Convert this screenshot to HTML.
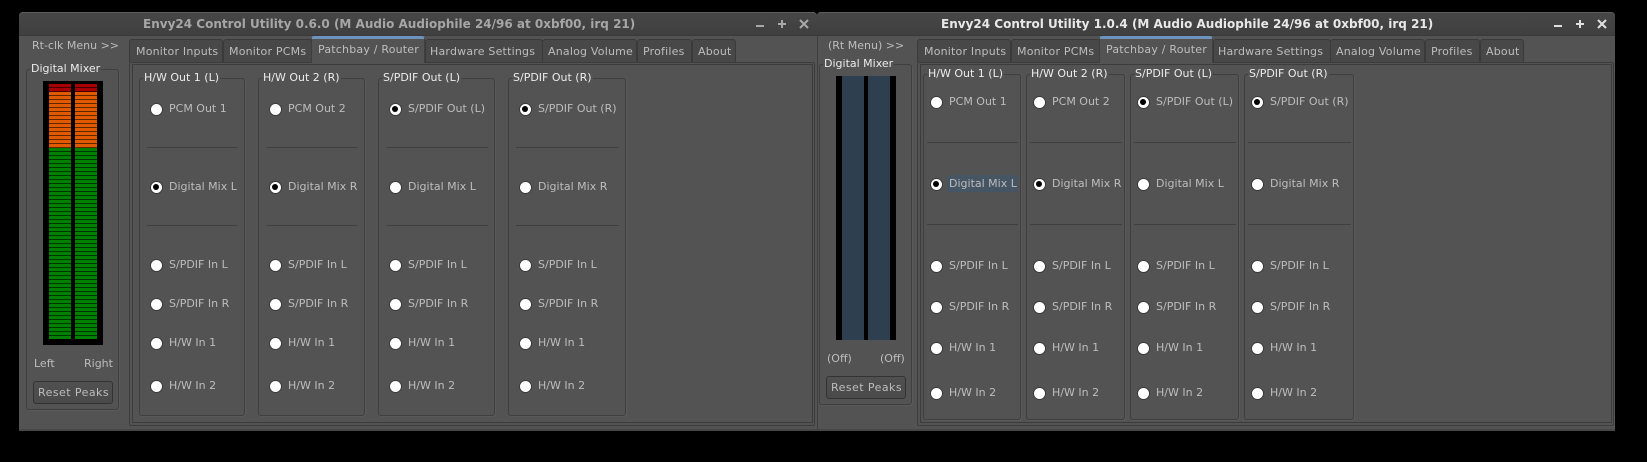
<!DOCTYPE html>
<html><head><meta charset="utf-8"><style>
html,body{margin:0;padding:0;background:#000;width:1647px;height:462px;overflow:hidden}
body{position:relative;font:11px "DejaVu Sans",sans-serif;color:#bdbdbd}
div{position:absolute;box-sizing:border-box}
.w{top:12px;height:419px;background:#535353;border-radius:4px 4px 0 0;border-bottom:2px solid #474747}
.tb{left:0;top:0;width:100%;height:24px;background:linear-gradient(#474747,#3f3f3f);border-top:1px solid #5c5c5c;border-bottom:1px solid #3a3a3a;border-radius:4px 4px 0 0}
.ti{top:16px;height:17px;line-height:17px;font-size:12px;font-weight:bold;white-space:pre}
.t{height:16px;line-height:16px;white-space:pre;margin-top:1px}
.k{letter-spacing:.2px}
.rp{letter-spacing:.45px}
.g{border:1px solid #3f3f3f;border-radius:3px;box-shadow:1px 1px 0 #5a5a5a}
.l{height:14px;line-height:14px;white-space:pre;color:#ececec;background:#535353;padding:0 1px;margin-top:1px}
.s{height:1px;background:#404040}
.r{width:11px;height:11px;margin:-.5px;border-radius:50%;background:#fff;box-shadow:0 0 0 1px #3a3a3a}
.r.o::after{content:"";position:absolute;left:2.5px;top:2.5px;width:6px;height:6px;border-radius:50%;background:#000}
.tab{top:39px;height:23px;background:#484848;border:1px solid #3a3a3a;border-bottom:0;border-radius:3px 3px 0 0}
.act{top:36px;height:27px;background:#535353;border:1px solid #3f3f3f;border-top:3px solid #6d92bd;border-bottom:0;border-radius:3px 3px 0 0}
.p{top:62px;height:364px;border:1px solid #3c3c3c;border-radius:2px}
.q{top:64px;height:360px;border:1px solid #3c3c3c}
.b{background:linear-gradient(#505050,#4a4a4a);border:1px solid #333;border-radius:3px;height:23px;width:80px}
</style></head><body>

<!-- window 1 -->
<div class="w" style="left:19px;width:798px"></div>
<div class="tb" style="left:19px;top:12px;width:798px"></div>
<div class="ti" style="left:143px;color:#a6a6a6">Envy24 Control Utility 0.6.0 (M Audio Audiophile 24/96 at 0xbf00, irq 21)</div>
<svg style="position:absolute;left:750px;top:15px" width="64" height="18" fill="none" stroke="#a8a8a8" stroke-width="2"><path d="M6 11h8M28 9h8M32 5v8M50 5l8 8M58 5l-8 8"/></svg>
<div class="t" style="left:32px;top:37px">Rt-clk Menu &gt;&gt;</div>

<div class="g" style="left:26px;top:69px;width:93px;height:341px"></div>
<div class="l" style="left:30px;top:61px;color:#ececec">Digital Mixer</div>
<div style="left:43px;top:81px;width:60px;height:264px;background:#000"></div>
<svg style="position:absolute;left:49px;top:84px" width="48" height="255">
<defs>
<pattern id="pr" width="48" height="4" patternUnits="userSpaceOnUse"><rect width="22" height="4" fill="#440000"/><rect x="26" width="22" height="4" fill="#440000"/><rect width="22" height="3" fill="#a80000"/><rect x="26" width="22" height="3" fill="#a80000"/></pattern>
<pattern id="po" width="48" height="4" patternUnits="userSpaceOnUse"><rect width="22" height="4" fill="#5e2600"/><rect x="26" width="22" height="4" fill="#5e2600"/><rect width="22" height="3" fill="#e25a00"/><rect x="26" width="22" height="3" fill="#e25a00"/></pattern>
<pattern id="pg" width="48" height="4" patternUnits="userSpaceOnUse"><rect width="22" height="4" fill="#003400"/><rect x="26" width="22" height="4" fill="#003400"/><rect width="22" height="3" fill="#008000"/><rect x="26" width="22" height="3" fill="#008000"/></pattern>
</defs>
<rect width="48" height="8" fill="url(#pr)"/>
<rect y="8" width="48" height="56" fill="url(#po)"/>
<rect y="64" width="48" height="191" fill="url(#pg)"/>
</svg>
<div class="t" style="left:34px;top:355px">Left</div>
<div class="t" style="left:84px;top:355px">Right</div>
<div class="b" style="left:33px;top:381px"></div>
<div class="t rp" style="left:38px;top:384px">Reset Peaks</div>

<div class="p" style="left:129px;width:686px"></div>
<div class="q" style="left:132px;width:681px;height:359px"></div>
<div class="tab" style="left:129px;width:94px"></div>
<div class="tab" style="left:223px;width:89px"></div>
<div class="tab" style="left:425px;width:118px"></div>
<div class="tab" style="left:542px;width:95px"></div>
<div class="tab" style="left:637px;width:55px"></div>
<div class="tab" style="left:692px;width:44px"></div>
<div class="act" style="left:311px;width:114px"></div>
<div class="t k" style="left:136px;top:43px">Monitor Inputs</div>
<div class="t k" style="left:229px;top:43px">Monitor PCMs</div>
<div class="t k" style="left:318px;top:41px">Patchbay / Router</div>
<div class="t k" style="left:430px;top:43px">Hardware Settings</div>
<div class="t k" style="left:548px;top:43px">Analog Volume</div>
<div class="t k" style="left:643px;top:43px">Profiles</div>
<div class="t k" style="left:698px;top:43px">About</div>

<div class="g" style="left:139px;top:78px;width:106px;height:338px"></div>
<div class="g" style="left:258px;top:78px;width:107px;height:338px"></div>
<div class="g" style="left:378px;top:78px;width:117px;height:338px"></div>
<div class="g" style="left:508px;top:78px;width:118px;height:338px"></div>
<div class="l" style="left:143px;top:70px">H/W Out 1 (L)</div>
<div class="l" style="left:262px;top:70px">H/W Out 2 (R)</div>
<div class="l" style="left:382px;top:70px">S/PDIF Out (L)</div>
<div class="l" style="left:512px;top:70px">S/PDIF Out (R)</div>
<div class="s" style="left:147px;top:147px;width:91px"></div>
<div class="s" style="left:147px;top:225px;width:91px"></div>
<div class="s" style="left:266px;top:147px;width:92px"></div>
<div class="s" style="left:266px;top:225px;width:92px"></div>
<div class="s" style="left:386px;top:147px;width:102px"></div>
<div class="s" style="left:386px;top:225px;width:102px"></div>
<div class="s" style="left:516px;top:147px;width:103px"></div>
<div class="s" style="left:516px;top:225px;width:103px"></div>

<div class="r" style="left:151px;top:104px"></div><div class="t" style="left:169px;top:100px">PCM Out 1</div>
<div class="r o" style="left:151px;top:182px"></div><div class="t" style="left:169px;top:178px">Digital Mix L</div>
<div class="r" style="left:151px;top:260px"></div><div class="t" style="left:169px;top:256px">S/PDIF In L</div>
<div class="r" style="left:151px;top:299px"></div><div class="t" style="left:169px;top:295px">S/PDIF In R</div>
<div class="r" style="left:151px;top:338px"></div><div class="t" style="left:169px;top:334px">H/W In 1</div>
<div class="r" style="left:151px;top:381px"></div><div class="t" style="left:169px;top:377px">H/W In 2</div>

<div class="r" style="left:270px;top:104px"></div><div class="t" style="left:288px;top:100px">PCM Out 2</div>
<div class="r o" style="left:270px;top:182px"></div><div class="t" style="left:288px;top:178px">Digital Mix R</div>
<div class="r" style="left:270px;top:260px"></div><div class="t" style="left:288px;top:256px">S/PDIF In L</div>
<div class="r" style="left:270px;top:299px"></div><div class="t" style="left:288px;top:295px">S/PDIF In R</div>
<div class="r" style="left:270px;top:338px"></div><div class="t" style="left:288px;top:334px">H/W In 1</div>
<div class="r" style="left:270px;top:381px"></div><div class="t" style="left:288px;top:377px">H/W In 2</div>

<div class="r o" style="left:390px;top:104px"></div><div class="t" style="left:408px;top:100px">S/PDIF Out (L)</div>
<div class="r" style="left:390px;top:182px"></div><div class="t" style="left:408px;top:178px">Digital Mix L</div>
<div class="r" style="left:390px;top:260px"></div><div class="t" style="left:408px;top:256px">S/PDIF In L</div>
<div class="r" style="left:390px;top:299px"></div><div class="t" style="left:408px;top:295px">S/PDIF In R</div>
<div class="r" style="left:390px;top:338px"></div><div class="t" style="left:408px;top:334px">H/W In 1</div>
<div class="r" style="left:390px;top:381px"></div><div class="t" style="left:408px;top:377px">H/W In 2</div>

<div class="r o" style="left:520px;top:104px"></div><div class="t" style="left:538px;top:100px">S/PDIF Out (R)</div>
<div class="r" style="left:520px;top:182px"></div><div class="t" style="left:538px;top:178px">Digital Mix R</div>
<div class="r" style="left:520px;top:260px"></div><div class="t" style="left:538px;top:256px">S/PDIF In L</div>
<div class="r" style="left:520px;top:299px"></div><div class="t" style="left:538px;top:295px">S/PDIF In R</div>
<div class="r" style="left:520px;top:338px"></div><div class="t" style="left:538px;top:334px">H/W In 1</div>
<div class="r" style="left:520px;top:381px"></div><div class="t" style="left:538px;top:377px">H/W In 2</div>

<!-- window 2 -->
<div class="w" style="left:817px;width:798px;border-left:1px solid #3f3f3f"></div>
<div class="tb" style="left:817px;top:12px;width:798px"></div>
<div class="ti" style="left:941px;color:#e8e8e8">Envy24 Control Utility 1.0.4 (M Audio Audiophile 24/96 at 0xbf00, irq 21)</div>
<svg style="position:absolute;left:1548px;top:15px" width="64" height="18" fill="none" stroke="#e0e0e0" stroke-width="2"><path d="M6 11h8M28 9h8M32 5v8M50 5l8 8M58 5l-8 8"/></svg>
<div class="t" style="left:828px;top:37px">(Rt Menu) &gt;&gt;</div>

<div class="g" style="left:819px;top:64px;width:93px;height:341px"></div>
<div class="l" style="left:823px;top:56px">Digital Mixer</div>
<div style="left:836px;top:76px;width:60px;height:264px;background:#000"></div>
<div style="left:842px;top:76px;width:22px;height:264px;background:#2e3f50"></div>
<div style="left:868px;top:76px;width:22px;height:264px;background:#2e3f50"></div>
<div class="t" style="left:827px;top:350px">(Off)</div>
<div class="t" style="left:880px;top:350px">(Off)</div>
<div class="b" style="left:826px;top:376px"></div>
<div class="t rp" style="left:831px;top:379px">Reset Peaks</div>

<div class="p" style="left:917px;width:697px"></div>
<div class="q" style="left:920px;width:692px;height:359px"></div>
<div class="tab" style="left:917px;width:94px"></div>
<div class="tab" style="left:1011px;width:89px"></div>
<div class="tab" style="left:1213px;width:118px"></div>
<div class="tab" style="left:1330px;width:95px"></div>
<div class="tab" style="left:1425px;width:55px"></div>
<div class="tab" style="left:1480px;width:44px"></div>
<div class="act" style="left:1099px;width:114px"></div>
<div class="t k" style="left:924px;top:43px">Monitor Inputs</div>
<div class="t k" style="left:1017px;top:43px">Monitor PCMs</div>
<div class="t k" style="left:1106px;top:41px">Patchbay / Router</div>
<div class="t k" style="left:1218px;top:43px">Hardware Settings</div>
<div class="t k" style="left:1336px;top:43px">Analog Volume</div>
<div class="t k" style="left:1431px;top:43px">Profiles</div>
<div class="t k" style="left:1486px;top:43px">About</div>

<div class="g" style="left:923px;top:74px;width:98px;height:346px"></div>
<div class="g" style="left:1026px;top:74px;width:99px;height:346px"></div>
<div class="g" style="left:1130px;top:74px;width:109px;height:346px"></div>
<div class="g" style="left:1244px;top:74px;width:110px;height:346px"></div>
<div class="l" style="left:927px;top:66px">H/W Out 1 (L)</div>
<div class="l" style="left:1030px;top:66px">H/W Out 2 (R)</div>
<div class="l" style="left:1134px;top:66px">S/PDIF Out (L)</div>
<div class="l" style="left:1248px;top:66px">S/PDIF Out (R)</div>
<div class="s" style="left:927px;top:142px;width:91px"></div>
<div class="s" style="left:927px;top:224px;width:91px"></div>
<div class="s" style="left:1030px;top:142px;width:92px"></div>
<div class="s" style="left:1030px;top:224px;width:92px"></div>
<div class="s" style="left:1134px;top:142px;width:102px"></div>
<div class="s" style="left:1134px;top:224px;width:102px"></div>
<div class="s" style="left:1248px;top:142px;width:103px"></div>
<div class="s" style="left:1248px;top:224px;width:103px"></div>

<div style="left:947px;top:175px;width:71px;height:17px;background:#455564;border-radius:2px"></div>

<div class="r" style="left:931px;top:97px"></div><div class="t" style="left:949px;top:93px">PCM Out 1</div>
<div class="r o" style="left:931px;top:179px"></div><div class="t" style="left:949px;top:175px">Digital Mix L</div>
<div class="r" style="left:931px;top:261px"></div><div class="t" style="left:949px;top:257px">S/PDIF In L</div>
<div class="r" style="left:931px;top:302px"></div><div class="t" style="left:949px;top:298px">S/PDIF In R</div>
<div class="r" style="left:931px;top:343px"></div><div class="t" style="left:949px;top:339px">H/W In 1</div>
<div class="r" style="left:931px;top:388px"></div><div class="t" style="left:949px;top:384px">H/W In 2</div>

<div class="r" style="left:1034px;top:97px"></div><div class="t" style="left:1052px;top:93px">PCM Out 2</div>
<div class="r o" style="left:1034px;top:179px"></div><div class="t" style="left:1052px;top:175px">Digital Mix R</div>
<div class="r" style="left:1034px;top:261px"></div><div class="t" style="left:1052px;top:257px">S/PDIF In L</div>
<div class="r" style="left:1034px;top:302px"></div><div class="t" style="left:1052px;top:298px">S/PDIF In R</div>
<div class="r" style="left:1034px;top:343px"></div><div class="t" style="left:1052px;top:339px">H/W In 1</div>
<div class="r" style="left:1034px;top:388px"></div><div class="t" style="left:1052px;top:384px">H/W In 2</div>

<div class="r o" style="left:1138px;top:97px"></div><div class="t" style="left:1156px;top:93px">S/PDIF Out (L)</div>
<div class="r" style="left:1138px;top:179px"></div><div class="t" style="left:1156px;top:175px">Digital Mix L</div>
<div class="r" style="left:1138px;top:261px"></div><div class="t" style="left:1156px;top:257px">S/PDIF In L</div>
<div class="r" style="left:1138px;top:302px"></div><div class="t" style="left:1156px;top:298px">S/PDIF In R</div>
<div class="r" style="left:1138px;top:343px"></div><div class="t" style="left:1156px;top:339px">H/W In 1</div>
<div class="r" style="left:1138px;top:388px"></div><div class="t" style="left:1156px;top:384px">H/W In 2</div>

<div class="r o" style="left:1252px;top:97px"></div><div class="t" style="left:1270px;top:93px">S/PDIF Out (R)</div>
<div class="r" style="left:1252px;top:179px"></div><div class="t" style="left:1270px;top:175px">Digital Mix R</div>
<div class="r" style="left:1252px;top:261px"></div><div class="t" style="left:1270px;top:257px">S/PDIF In L</div>
<div class="r" style="left:1252px;top:302px"></div><div class="t" style="left:1270px;top:298px">S/PDIF In R</div>
<div class="r" style="left:1252px;top:343px"></div><div class="t" style="left:1270px;top:339px">H/W In 1</div>
<div class="r" style="left:1252px;top:388px"></div><div class="t" style="left:1270px;top:384px">H/W In 2</div>

</body></html>
